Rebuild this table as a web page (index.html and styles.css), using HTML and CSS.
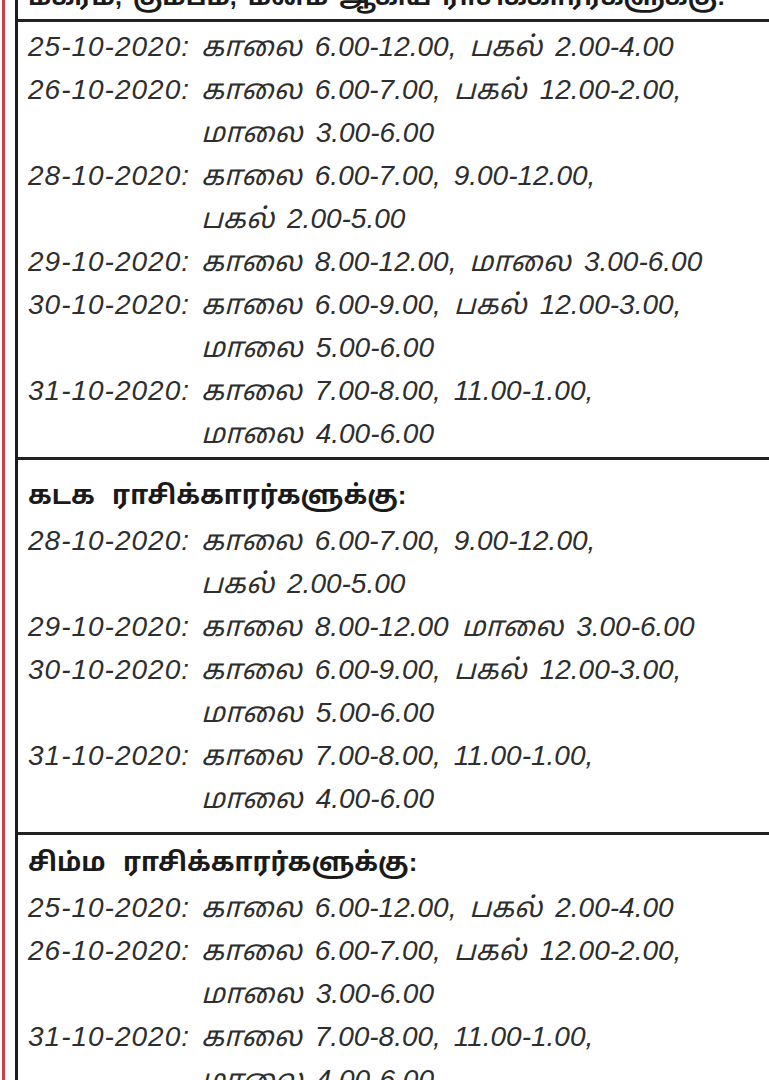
FILE: index.html
```html
<!DOCTYPE html>
<html lang="ta">
<head>
<meta charset="utf-8">
<link rel="stylesheet" href="styles.css">
</head>
<body>
<div class="page">
  <div class="box">
    <section class="sec sec-top">
      <h2 class="title">மகரம், கும்பம், மீனம் ஆகிய ராசிக்காரர்களுக்கு:</h2>
    </section>
    <section class="sec sec-1">
      <div class="row"><span class="date">25-10-2020:</span><span class="times">காலை 6.00-12.00, பகல் 2.00-4.00</span></div>
      <div class="row"><span class="date">26-10-2020:</span><span class="times">காலை 6.00-7.00, பகல் 12.00-2.00,<br>மாலை 3.00-6.00</span></div>
      <div class="row"><span class="date">28-10-2020:</span><span class="times">காலை 6.00-7.00, 9.00-12.00,<br>பகல் 2.00-5.00</span></div>
      <div class="row"><span class="date">29-10-2020:</span><span class="times">காலை 8.00-12.00, மாலை 3.00-6.00</span></div>
      <div class="row"><span class="date">30-10-2020:</span><span class="times">காலை 6.00-9.00, பகல் 12.00-3.00,<br>மாலை 5.00-6.00</span></div>
      <div class="row"><span class="date">31-10-2020:</span><span class="times">காலை 7.00-8.00, 11.00-1.00,<br>மாலை 4.00-6.00</span></div>
    </section>
    <section class="sec sec-2">
      <h2 class="title">கடக ராசிக்காரர்களுக்கு:</h2>
      <div class="row"><span class="date">28-10-2020:</span><span class="times">காலை 6.00-7.00, 9.00-12.00,<br>பகல் 2.00-5.00</span></div>
      <div class="row"><span class="date">29-10-2020:</span><span class="times">காலை 8.00-12.00 மாலை 3.00-6.00</span></div>
      <div class="row"><span class="date">30-10-2020:</span><span class="times">காலை 6.00-9.00, பகல் 12.00-3.00,<br>மாலை 5.00-6.00</span></div>
      <div class="row"><span class="date">31-10-2020:</span><span class="times">காலை 7.00-8.00, 11.00-1.00,<br>மாலை 4.00-6.00</span></div>
    </section>
    <section class="sec sec-3">
      <h2 class="title">சிம்ம ராசிக்காரர்களுக்கு:</h2>
      <div class="row"><span class="date">25-10-2020:</span><span class="times">காலை 6.00-12.00, பகல் 2.00-4.00</span></div>
      <div class="row"><span class="date">26-10-2020:</span><span class="times">காலை 6.00-7.00, பகல் 12.00-2.00,<br>மாலை 3.00-6.00</span></div>
      <div class="row"><span class="date">31-10-2020:</span><span class="times">காலை 7.00-8.00, 11.00-1.00,<br>மாலை 4.00-6.00</span></div>
    </section>
  </div>
</div>
</body>
</html>
```

FILE: styles.css
```css
html, body {
  margin: 0;
  padding: 0;
  background: #ffffff;
  height: 1080px;
  overflow: hidden;
}

.page {
  margin-left: 2px;
  border-left: 3px solid #c8444a;
  padding-left: 10px;
  height: 1080px;
  overflow: hidden;
}

.box {
  border-left: 3px solid #1c1c1c;
  min-height: 1200px;
  font-family: "Liberation Sans", "Noto Sans Tamil", "Lohit Tamil", sans-serif;
  color: #2e2e2e;
}

.sec {
  border-bottom: 3px solid #222222;
  padding-left: 10px;
}

.sec-top {
  height: 19px;
  overflow: hidden;
}

.sec-top .title {
  margin-top: -25px;
  font-size: 25px;
  word-spacing: 4px;
}

.sec-1 {
  padding-top: 3px;
  padding-bottom: 2px;
}

.sec-2 {
  padding-top: 14px;
  padding-bottom: 12px;
}

.sec-3 {
  padding-top: 6px;
  border-bottom: none;
}

.title {
  margin: 0 0 2px;
  font-size: 26px;
  line-height: 43px;
  font-weight: bold;
  word-spacing: 10px;
  color: #1a1a1a;
  white-space: nowrap;
}

.row {
  display: grid;
  grid-template-columns: 173px auto;
  font-size: 28px;
  line-height: 43px;
  font-style: italic;
  white-space: nowrap;
}

.date {
  letter-spacing: 1px;
}

.times {
  word-spacing: 5px;
}
```
